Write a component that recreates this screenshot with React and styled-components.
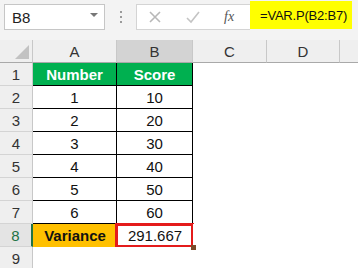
import React from 'react'
import styled, { createGlobalStyle } from 'styled-components'

const Global = createGlobalStyle`
  html, body { margin: 0; padding: 0; background: #ffffff; }
  body { font-family: "Liberation Sans", Arial, sans-serif; }
`

const columns = ['A', 'B', 'C', 'D', '']
const rows = [
  ['1', '10'],
  ['2', '20'],
  ['3', '30'],
  ['4', '40'],
  ['5', '50'],
  ['6', '60'],
]

function App() {
  return (
    <Sheet>
      <Global />
      <FormulaBar>
        <NameBox>
          <span>B8</span>
          <Caret />
        </NameBox>
        <Dots>
          <i /><i /><i />
        </Dots>
        <ActionBox>
          <Action>
            <svg width="14" height="14" viewBox="0 0 14 14">
              <path d="M2 2 L12 12 M12 2 L2 12" stroke="#b8b8b8" strokeWidth="1.6" fill="none" />
            </svg>
          </Action>
          <Action>
            <svg width="16" height="14" viewBox="0 0 16 14">
              <path d="M2 8 L6 12 L14 2" stroke="#c4c4c4" strokeWidth="1.6" fill="none" />
            </svg>
          </Action>
          <Fx>fx</Fx>
        </ActionBox>
        <Formula>=VAR.P(B2:B7)</Formula>
      </FormulaBar>

      <Grid>
        <Corner><Tri /></Corner>
        {columns.map((c, i) => (
          <ColHead key={i} active={c === 'B'} last={i === columns.length - 1}>{c}</ColHead>
        ))}

        <RowHead>1</RowHead>
        <Cell head boxed>Number</Cell>
        <Cell head boxed>Score</Cell>
        <Cell /><Cell /><Cell />

        {rows.map((r, i) => (
          <React.Fragment key={i}>
            <RowHead>{i + 2}</RowHead>
            <Cell boxed>{r[0]}</Cell>
            <Cell boxed>{r[1]}</Cell>
            <Cell /><Cell /><Cell />
          </React.Fragment>
        ))}

        <RowHead active>8</RowHead>
        <Cell total>Variance</Cell>
        <Cell selected>291.667<Handle /></Cell>
        <Cell /><Cell /><Cell />

        <RowHead>9</RowHead>
        <Cell /><Cell /><Cell /><Cell /><Cell />
      </Grid>
    </Sheet>
  )
}

export default App

const Sheet = styled.div`
  width: 358px;
  height: 268px;
  overflow: hidden;
  background: #ffffff;
`

const FormulaBar = styled.div`
  height: 40px;
  box-sizing: border-box;
  display: flex;
  align-items: flex-start;
  padding: 4px 0 0 4px;
  background: #f3f3f3;
`

const NameBox = styled.div`
  width: 101px;
  height: 26px;
  box-sizing: border-box;
  border: 1px solid #c6c6c6;
  background: #ffffff;
  display: flex;
  align-items: center;
  justify-content: space-between;
  padding: 0 6px 0 7px;
  font-size: 15px;
  color: #222;
`

const Caret = styled.span`
  width: 0;
  height: 0;
  border-left: 4px solid transparent;
  border-right: 4px solid transparent;
  border-top: 4px solid #777;
  margin-top: -4px;
`

const Dots = styled.div`
  width: 31px;
  height: 26px;
  display: flex;
  flex-direction: column;
  align-items: center;
  justify-content: center;
  gap: 3px;

  i {
    display: block;
    width: 2px;
    height: 2px;
    background: #9a9a9a;
  }
`

const ActionBox = styled.div`
  width: 114px;
  height: 26px;
  box-sizing: border-box;
  border: 1px solid #d4d4d4;
  border-right: none;
  background: #ffffff;
  display: flex;
  align-items: center;
  padding-left: 11px;
`

const Action = styled.span`
  width: 37px;
  display: flex;
  align-items: center;
  justify-content: flex-start;
`

const Fx = styled.span`
  font-family: "Liberation Serif", serif;
  font-style: italic;
  font-size: 14px;
  color: #555;
  margin-left: 2px;
`

const Formula = styled.div`
  width: 102px;
  height: 28px;
  margin-top: -3px;
  box-sizing: border-box;
  padding-left: 10px;
  background: #ffff00;
  display: flex;
  align-items: center;
  font-size: 13px;
  letter-spacing: -0.2px;
  white-space: nowrap;
  color: #111;
`

const Grid = styled.div`
  display: grid;
  grid-template-columns: 33px 84px 76px 74px 73px 1fr;
  grid-auto-rows: 23px;
`

const Corner = styled.div`
  background: #efefef;
  border-right: 1px solid #c8c8c8;
  border-bottom: 1px solid #a9a9a9;
  position: relative;
`

const Tri = styled.span`
  position: absolute;
  right: 3px;
  bottom: 3px;
  width: 0;
  height: 0;
  border-left: 14px solid transparent;
  border-bottom: 14px solid #c2c2c2;
`

const ColHead = styled.div`
  box-sizing: border-box;
  background: ${p => (p.active ? '#d3d3d3' : '#efefef')};
  border-right: ${p => (p.last ? 'none' : '1px solid #c8c8c8')};
  border-bottom: 1px solid #a9a9a9;
  display: flex;
  align-items: center;
  justify-content: center;
  font-size: 15px;
  color: #333;
`

const RowHead = styled.div`
  box-sizing: border-box;
  background: ${p => (p.active ? '#e4e4e4' : '#efefef')};
  border-right: ${p => (p.active ? '2px solid #217346' : '1px solid #c8c8c8')};
  border-bottom: 1px solid #d4d4d4;
  display: flex;
  align-items: center;
  justify-content: center;
  font-size: 15px;
  color: ${p => (p.active ? '#217346' : '#333')};
`

const Cell = styled.div`
  box-sizing: border-box;
  position: relative;
  display: flex;
  align-items: center;
  justify-content: center;
  font-size: 15px;
  color: #111;
  background: ${p => (p.head ? '#00b050' : p.total ? '#ffc000' : '#ffffff')};
  font-weight: ${p => (p.head || p.total ? 700 : 400)};
  ${p => p.head && 'color: #ffffff;'}
  ${p => p.boxed && 'border-right: 1px solid #000; border-bottom: 1px solid #000;'}

  ${p => p.selected && `
    &::after {
      content: '';
      position: absolute;
      left: -2px;
      top: -1px;
      right: -1px;
      bottom: -1px;
      border: 3px solid #e41b1b;
    }
  `}
`

const Handle = styled.span`
  position: absolute;
  right: -3px;
  bottom: -3px;
  width: 5px;
  height: 5px;
  background: #7a4a2a;
  z-index: 1;
`
